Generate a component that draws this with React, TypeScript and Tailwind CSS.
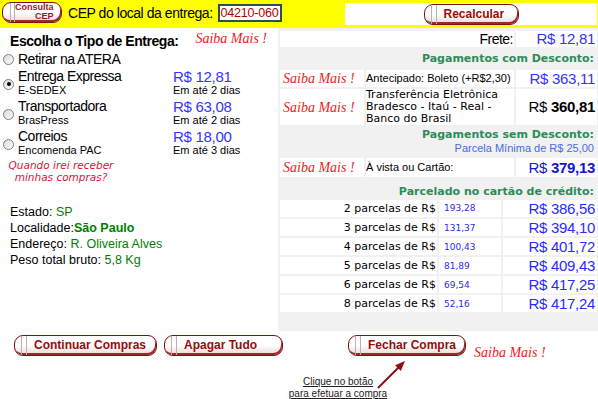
import React from 'react';

const sans = "font-['Liberation_Sans',Arial,sans-serif]";
const verdana = "font-['DejaVu_Sans',Verdana,sans-serif]";

function SaibaMais({ className = '' }: { className?: string }) {
  return (
    <span className={`font-['Liberation_Serif',serif] text-[14px] leading-[15px] italic text-[#ee1c24] ${className}`}>
      Saiba Mais !
    </span>
  );
}

function Btn({ label, className = '' }: { label: React.ReactNode; className?: string }) {
  return (
    <div
      className={`flex h-[21px] shrink-0 items-stretch overflow-hidden rounded-[9px] border border-[#7e1010] bg-gradient-to-b from-white from-50% to-[#ead6d6] shadow-[inset_-1px_-2px_0_#9c2a2a] ${className}`}
    >
      <span className="ml-[6px] w-[6px] shrink-0 border-x border-[#bdb0b0]" />
      <span className="flex items-center pb-[1px] pl-[7px] text-[12px] font-bold text-[#9b0a0a]">{label}</span>
    </div>
  );
}

function Radio({ checked = false }: { checked?: boolean }) {
  return (
    <span className="flex h-[11px] w-[11px] items-center justify-center rounded-full border border-[#7f7f7f] bg-gradient-to-br from-[#d8d8d8] to-white">
      {checked && <span className="h-[4px] w-[4px] rounded-full bg-black" />}
    </span>
  );
}

const options = [
  { title: 'Entrega Expressa', sub: 'E-SEDEX', price: 'R$ 12,81', prazo: 'Em até 2 dias', checked: true },
  { title: 'Transportadora', sub: 'BrasPress', price: 'R$ 63,08', prazo: 'Em até 2 dias' },
  { title: 'Correios', sub: 'Encomenda PAC', price: 'R$ 18,00', prazo: 'Em até 3 dias' },
];

const parcelas = [
  { n: 2, v: '193,28', t: 'R$ 386,56' },
  { n: 3, v: '131,37', t: 'R$ 394,10' },
  { n: 4, v: '100,43', t: 'R$ 401,72' },
  { n: 5, v: '81,89', t: 'R$ 409,43' },
  { n: 6, v: '69,54', t: 'R$ 417,25' },
  { n: 8, v: '52,16', t: 'R$ 417,24' },
];

export default function App() {
  return (
    <div className={`relative h-[399px] w-[598px] overflow-hidden bg-white text-black ${sans}`}>
      {/* barra do CEP */}
      <div className="flex h-[28px] items-start bg-[#ffff00]">
        <div className="ml-[2px] mt-[2px] flex h-[21px] w-[60px] items-stretch overflow-hidden rounded-[9px] border border-[#7e1010] bg-gradient-to-b from-white from-50% to-[#ead6d6] shadow-[inset_-1px_-2px_0_#9c2a2a]">
          <span className="ml-[7px] w-[5px] shrink-0 border-x border-[#bdb0b0]" />
          <span className="flex flex-1 flex-col items-end justify-center pb-[1px] pr-[8px] text-[9px] leading-[9px] font-bold text-[#a3122a]">
            <span>Consulta</span>
            <span>CEP</span>
          </span>
        </div>
        <span className="ml-[6px] mt-[5px] text-[14px] leading-[16px] tracking-[-0.45px]">CEP do local da entrega:</span>
        <div className="ml-[5px] mt-[4px] flex h-[18px] w-[64px] items-center overflow-hidden whitespace-nowrap border-2 border-[#2f4f4f] bg-white pl-[1px] text-[12.5px] leading-[14px] tracking-[-0.2px] text-[#b00000]">
          04210-060
        </div>
        <div className="ml-auto mr-[1px] mt-[3px] flex h-[22px] w-[252px] items-center justify-center bg-white">
          <Btn label="Recalcular" className="w-[95px]" />
        </div>
      </div>

      <div className="flex h-[303px]">
        {/* coluna esquerda */}
        <div className="w-[278px] pt-[3px]">
          <div className="flex h-[19px] items-start">
            <span className="ml-[10px] mt-[2px] text-[14px] leading-[16px] font-bold tracking-[-0.45px]">
              Escolha o Tipo de Entrega:
            </span>
            <SaibaMais className="ml-auto mr-[11px]" />
          </div>
          <div className="flex h-[18px] items-center">
            <span className="flex w-[18px] justify-start pl-[3px]">
              <Radio />
            </span>
            <span className="text-[14px] leading-[16px] tracking-[-0.5px]">Retirar na ATERA</span>
          </div>
          {options.map((o) => (
            <div key={o.title} className="flex h-[30px] items-center">
              <span className="flex w-[18px] pl-[3px] pt-[2px]">
                <Radio checked={o.checked} />
              </span>
              <div className="flex w-[155px] flex-col self-start pt-[1px]">
                <span className="text-[14px] leading-[15px] tracking-[-0.5px]">{o.title}</span>
                <span className="text-[11px] leading-[12px]">{o.sub}</span>
              </div>
              <div className="flex flex-col self-start pt-[1px]">
                <span className="text-[15px] leading-[15px] tracking-[-0.3px] text-[#3333ff]">{o.price}</span>
                <span className="text-[11px] leading-[12px]">{o.prazo}</span>
              </div>
            </div>
          ))}
          <div
            className={`ml-[2px] mt-[1px] flex w-[118px] flex-col text-center text-[10.5px] leading-[12px] italic text-[#e0103c] ${verdana}`}
          >
            <span>Quando irei receber</span>
            <span>minhas compras?</span>
          </div>
          <div className="mt-[21px] flex flex-col pl-[10px] text-[12.5px] leading-[16px]">
            <span>
              Estado: <span className="text-[#008000]">SP</span>
            </span>
            <span>
              Localidade:<span className="font-bold text-[#008000]">São Paulo</span>
            </span>
            <span>
              Endereço: <span className="text-[#008000]">R. Oliveira Alves</span>
            </span>
            <span>
              Peso total bruto: <span className="text-[#008000]">5,8 Kg</span>
            </span>
          </div>
        </div>

        {/* coluna direita */}
        <div className="flex flex-1 flex-col gap-[2px] bg-[#f1f1f1] pl-[2px] pr-[1px] pt-[3px]">
          <div className="flex h-[16px] gap-[2px]">
            <div className="flex w-[234px] items-center justify-end bg-white pr-[1px] text-[14px] leading-[16px] tracking-[-0.5px]">
              Frete:
            </div>
            <div className="flex flex-1 items-center justify-end bg-white pr-[2px] text-[15px] leading-[16px] tracking-[-0.3px] text-[#3333ff]">
              R$ 12,81
            </div>
          </div>

          <div className={`flex h-[19px] items-end justify-end pb-[3px] pr-[3px] text-[11px] leading-[13px] font-bold text-[#2e8b57] ${verdana}`}>
            Pagamentos com Desconto:
          </div>

          <div className="flex h-[17px] gap-[2px]">
            <div className="flex w-[84px] items-center bg-white pl-[3px]">
              <SaibaMais />
            </div>
            <div className="flex w-[148px] items-center bg-white text-[11px] leading-[13px]">Antecipado: Boleto (+R$2,30)</div>
            <div className="flex flex-1 items-center justify-end bg-white pr-[2px] text-[15px] leading-[16px] tracking-[-0.3px] text-[#3333ff]">
              R$ 363,11
            </div>
          </div>

          <div className="flex h-[36px] gap-[2px]">
            <div className="flex w-[84px] items-center bg-white pl-[3px]">
              <SaibaMais />
            </div>
            <div className={`flex w-[148px] flex-col justify-center bg-white text-[11px] leading-[12px] ${verdana}`}>
              <span>Transferência Eletrônica</span>
              <span>Bradesco - Itaú - Real -</span>
              <span>Banco do Brasil</span>
            </div>
            <div className="flex flex-1 items-center justify-end bg-white pr-[2px] text-[15px] leading-[16px] tracking-[-0.3px]">
              R$&nbsp;<span className="font-bold">360,81</span>
            </div>
          </div>

          <div className="flex h-[29px] flex-col items-end pr-[3px] pt-[1px]">
            <span className={`text-[11px] leading-[13px] font-bold text-[#2e8b57] ${verdana}`}>Pagamentos sem Desconto:</span>
            <span className="mt-[1px] text-[11px] leading-[13px] text-[#4a6ae6]">Parcela Mínima de R$ 25,00</span>
          </div>

          <div className="flex h-[19px] gap-[2px]">
            <div className="flex w-[84px] items-center bg-white pl-[3px]">
              <SaibaMais />
            </div>
            <div className="flex w-[148px] items-center bg-white text-[11px] leading-[13px]">À vista ou Cartão:</div>
            <div className="flex flex-1 items-center justify-end bg-white pr-[2px] text-[15px] leading-[16px] tracking-[-0.3px] text-[#1515cc]">
              R$&nbsp;<span className="font-bold">379,13</span>
            </div>
          </div>

          <div className={`flex h-[19px] items-end justify-end pr-[3px] text-[11px] leading-[13px] font-bold text-[#2e8b57] ${verdana}`}>
            Parcelado no cartão de crédito:
          </div>

          {parcelas.map((p, i) => (
            <div key={p.n} className="flex h-[17px] gap-[2px]">
              <div className={`flex w-[157px] items-center justify-end bg-white pr-[1px] text-[11px] leading-[13px] ${verdana}`}>
                {p.n} parcelas de R$
              </div>
              <div
                className={`flex w-[62px] bg-white pl-[5px] text-[9px] leading-[10px] text-[#2a2aee] ${verdana} ${
                  i === 0 ? 'items-start pt-[3px]' : 'items-end pb-[3px]'
                }`}
              >
                {p.v}
              </div>
              <div className="flex flex-1 items-center justify-end bg-white pr-[2px] text-[15px] leading-[16px] tracking-[-0.3px] text-[#2a2aff]">
                {p.t}
              </div>
            </div>
          ))}
        </div>
      </div>

      {/* botões */}
      <div className="relative h-[68px]">
        <div className="flex items-start pl-[14px] pt-[4px]">
          <Btn label="Continuar Compras" className="w-[143px]" />
          <Btn label="Apagar Tudo" className="ml-[7px] w-[119px]" />
          <Btn label="Fechar Compra" className="ml-[65px] w-[118px]" />
          <SaibaMais className="ml-[8px] mt-[10px]" />
        </div>
        <div className="ml-[284px] mt-[16px] flex w-[108px] flex-col items-center text-[10px] leading-[12px] text-[#222]">
          <span className="underline">Clique no botão</span>
          <span className="underline">para efetuar a compra</span>
        </div>
        <svg className="absolute left-[376px] top-[27px]" width="34" height="34" viewBox="0 0 34 34">
          <line x1="2" y1="30" x2="24" y2="8" stroke="#8b0f0f" strokeWidth="2" />
          <polygon points="29,3 24.8,12.9 19.1,7.3" fill="#8b0f0f" />
        </svg>
      </div>
    </div>
  );
}
